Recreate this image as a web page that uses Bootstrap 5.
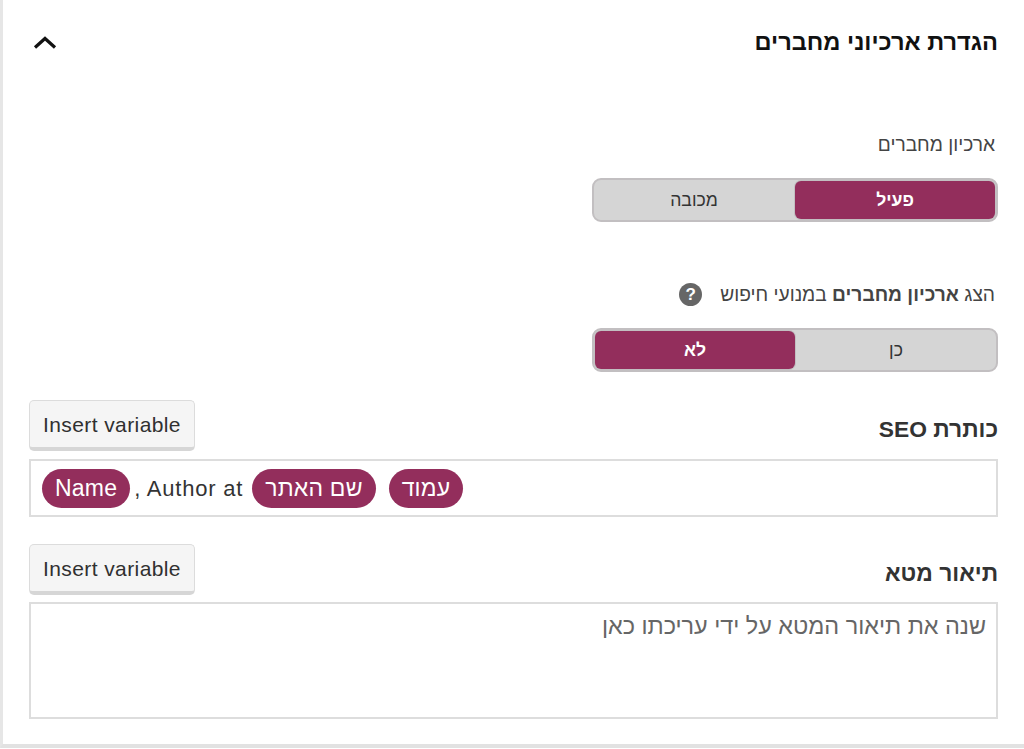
<!DOCTYPE html>
<html lang="he" dir="rtl">
<head>
<meta charset="utf-8">
<title>הגדרת ארכיוני מחברים</title>
<link href="https://cdn.jsdelivr.net/npm/bootstrap@5.3.0/dist/css/bootstrap.min.css" rel="stylesheet">
<style>
html,body{height:749px;overflow:hidden;background:#fff}
body{font-family:"Liberation Sans",Arial,sans-serif;color:#303030;font-size:18px}
.panel-box{width:1024px;height:748px;padding:0 26px;border-left:3px solid #e6e6e6;border-bottom:4px solid #e2e2e2}
.panel-head{height:83px;padding-left:1px}
.panel-title{font-size:23.6px;line-height:28px;font-weight:700;color:#111;margin:0}
.chev{width:28px;height:16px;display:block;margin-top:2px}
.field-lbl{font-size:19.2px;line-height:22px;color:#444;margin:0;padding-right:3px}
.first-lbl{margin-top:51px}
.seg{width:406px;height:44px;background:#d5d5d5;border:2px solid #c2bfc1;border-radius:9px;margin-top:22px;overflow:hidden}
.seg-opt{flex:1 1 50%;font-size:17.6px;display:flex;align-items:center;justify-content:center;color:#333}
.seg-on{background:#932e5c;color:#fff;font-weight:700;border-radius:6px;margin:1px;box-shadow:0 0 0 1px #c2bfc1}
.help-dot{width:23px;height:23px;border-radius:50%;background:#666;color:#fff;font-size:17px;font-weight:700;display:inline-flex;align-items:center;justify-content:center;margin-right:18px}
.second-lbl{margin-top:61px}
.var-row{margin-top:28px;height:50px}
.var-lbl{font-size:22.8px;font-weight:700;color:#333;margin:9px 0 0;padding-top:8px;line-height:24px}
.var-btn{width:166px;height:51px;background:#f5f5f5;border:1px solid #dcdcdc;border-bottom:4px solid #d6d6d6;border-radius:5px;color:#303030;font-size:21px;letter-spacing:.4px;padding:2px 0 0}
.var-btn:hover{background:#f5f5f5;color:#303030;border-color:#dcdcdc}
.chip-box{height:58px;margin-top:9px;border:2px solid #ddd;padding:0 11px;font-size:22px;letter-spacing:.8px;color:#333;gap:13px}
.tag-pill{background:#932e5c;color:#fff;border-radius:20px;height:39px;display:inline-flex;align-items:center;padding:0 13px;font-size:23px;letter-spacing:.2px}
.author-run{gap:4px;margin-right:-4px}
.meta-box{height:117px;margin-top:8px;border:2px solid #ddd;padding:9px 10px;font-size:23.4px;color:#666;line-height:26px}
.gap-meta{margin-top:27px}
</style>
</head>
<body>
<div class="panel-box">
  <div class="panel-head d-flex justify-content-between align-items-center">
    <h2 class="panel-title">הגדרת ארכיוני מחברים</h2>
    <svg class="chev" viewBox="0 0 28 16" aria-hidden="true"><path d="M5 12.5 L15 3.5 L25 12.5" fill="none" stroke="#111" stroke-width="3.2"/></svg>
  </div>

  <p class="field-lbl first-lbl">ארכיון מחברים</p>
  <div class="seg d-flex">
    <div class="seg-opt seg-on">פעיל</div>
    <div class="seg-opt">מכובה</div>
  </div>

  <p class="field-lbl second-lbl d-flex align-items-center"><span>הצג <b>ארכיון מחברים</b> במנועי חיפוש</span><span class="help-dot">?</span></p>
  <div class="seg d-flex">
    <div class="seg-opt">כן</div>
    <div class="seg-opt seg-on">לא</div>
  </div>

  <div class="var-row d-flex justify-content-between align-items-start">
    <p class="var-lbl">כותרת SEO</p>
    <button type="button" class="btn var-btn" dir="ltr">Insert variable</button>
  </div>
  <div class="chip-box d-flex align-items-center justify-content-end">
    <span class="tag-pill">עמוד</span>
    <span class="tag-pill">שם האתר</span>
    <span dir="ltr" class="author-run d-flex align-items-center"><span class="tag-pill">Name</span><span>, Author at</span></span>
  </div>

  <div class="var-row gap-meta d-flex justify-content-between align-items-start">
    <p class="var-lbl">תיאור מטא</p>
    <button type="button" class="btn var-btn" dir="ltr">Insert variable</button>
  </div>
  <div class="meta-box">שנה את תיאור המטא על ידי עריכתו כאן</div>
</div>
<script src="https://cdn.jsdelivr.net/npm/bootstrap@5.3.0/dist/js/bootstrap.bundle.min.js"></script>
</body>
</html>
